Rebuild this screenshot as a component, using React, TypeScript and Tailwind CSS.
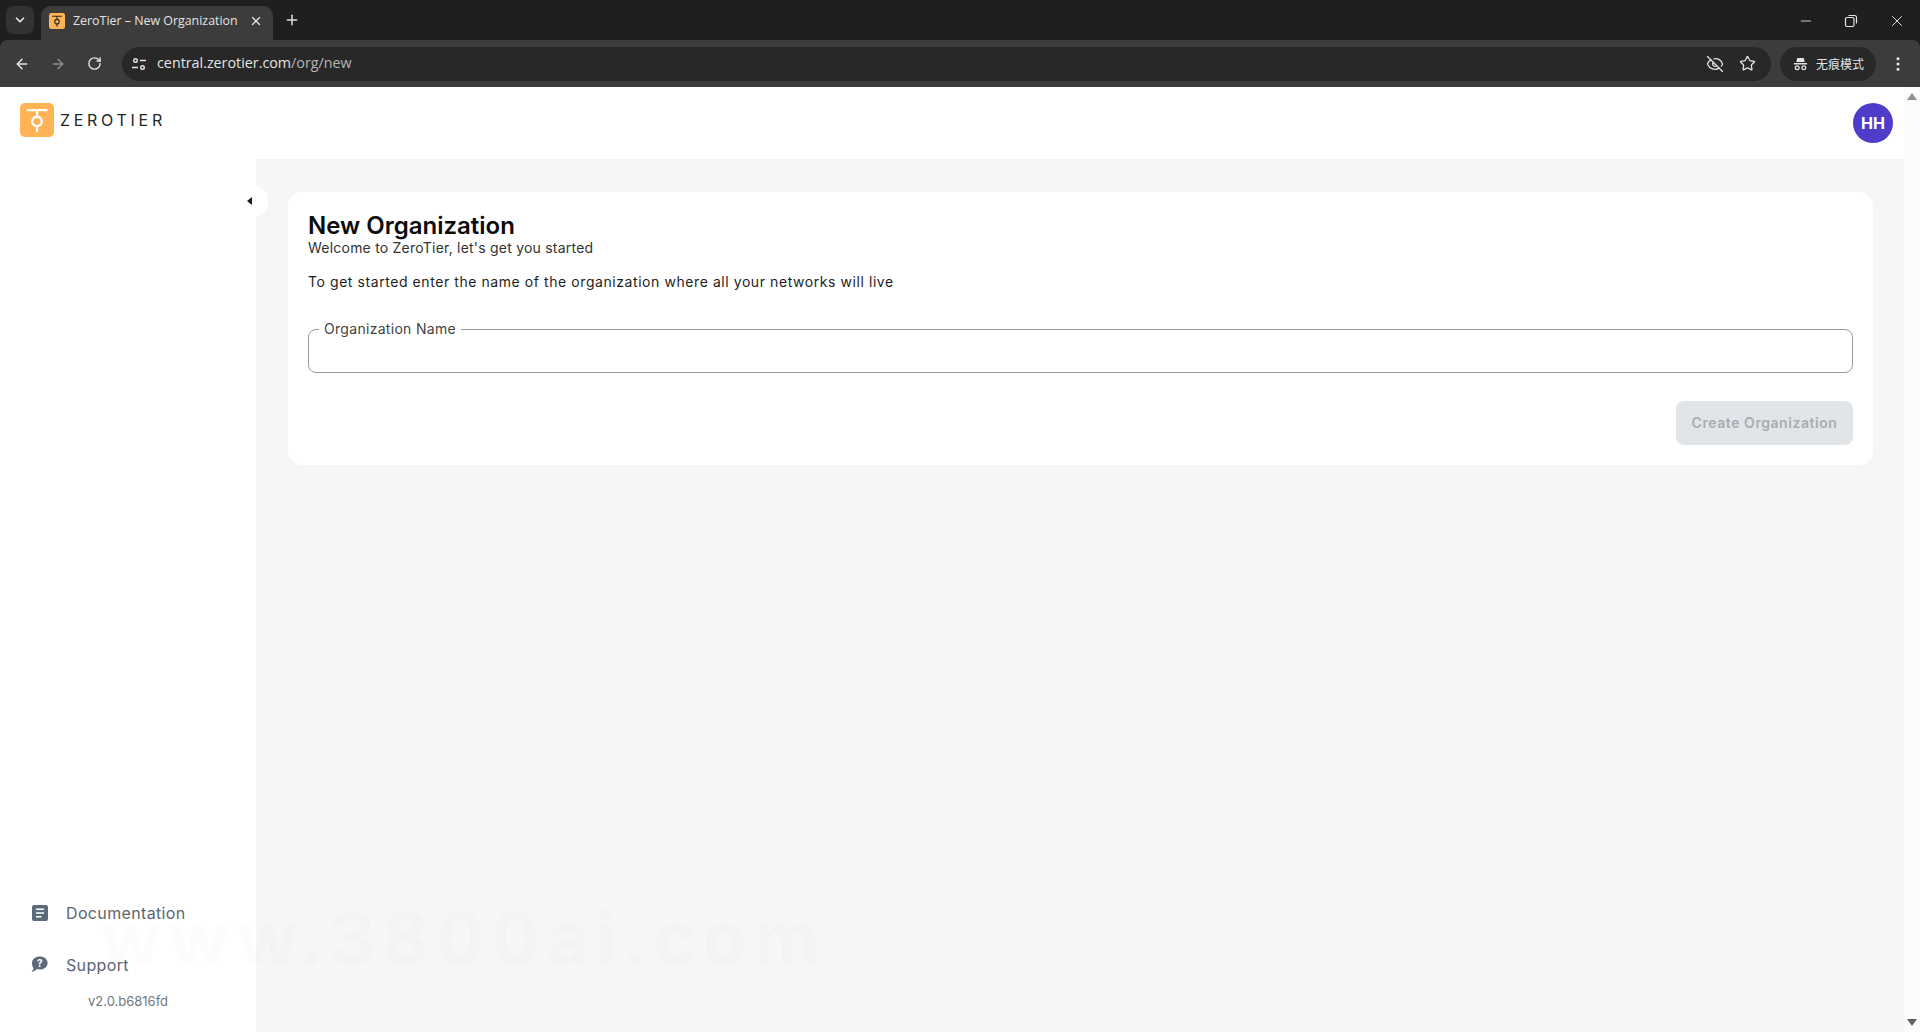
import { ArrowLeft, ArrowRight, ChevronDown, EyeOff, MoreVertical, Plus, RotateCw, Star, X, Minus } from "lucide-react";

function ZeroTierMark({ size, stroke }: { size: number; stroke: string }) {
  return (
    <svg width={size} height={size} viewBox="0 0 36 36" fill="none">
      <rect width="36" height="36" rx="5" fill="#ffb354" />
      <path d="M7 7.5h22M18 7.5v6.5M18 25v6" stroke={stroke} strokeWidth="2.4" />
      <circle cx="18" cy="19.5" r="5" stroke={stroke} strokeWidth="2.6" />
    </svg>
  );
}

function ChromeBar() {
  return (
    <div className="h-[87px] shrink-0 bg-[#1f1f1f] font-['Open_Sans',sans-serif] text-[#e3e3e3]">
      {/* tab strip */}
      <div className="flex h-10 items-end pl-[6px]">
        <div className="mb-[6px] flex h-7 w-7 items-center justify-center rounded-lg bg-[#333333]">
          <ChevronDown size={14} strokeWidth={3} />
        </div>
        <div className="ml-[7px] flex h-[34px] w-[232px] items-center rounded-t-[10px] bg-[#3c3c3c] pb-[4px] pl-2 pr-2">
          <ZeroTierMark size={16} stroke="#2a2a2a" />
          <span className="ml-2 text-[12.4px] whitespace-nowrap">ZeroTier – New Organization</span>
          <X size={14} strokeWidth={2.2} className="ml-auto mr-[2px]" />
        </div>
        <Plus size={16} strokeWidth={2.2} className="mb-[12px] ml-[11px]" />
        <div className="mb-[10px] ml-auto flex items-center gap-[30px] pr-[14px]">
          <Minus size={16} strokeWidth={1.3} />
          <svg width="14" height="14" viewBox="0 0 14 14" fill="none" stroke="currentColor" strokeWidth="1.2">
            <rect x="1.5" y="3.5" width="8.5" height="9" rx="1.5" />
            <path d="M4.5 1.5h6a2 2 0 0 1 2 2v6" />
          </svg>
          <X size={18} strokeWidth={1.3} />
        </div>
      </div>
      {/* toolbar */}
      <div className="flex h-[47px] items-center rounded-t-lg bg-[#3c3c3c] pl-[14px] pr-[13px]">
        <ArrowLeft size={16} strokeWidth={2.2} />
        <ArrowRight size={16} strokeWidth={2.2} className="ml-[20px] text-[#8a8a8a]" />
        <RotateCw size={15} strokeWidth={2.2} className="ml-[21px]" />
        <div className="ml-[20px] flex h-[34px] min-w-0 flex-1 items-center rounded-full bg-[#282828] pl-[8px] pr-[15px]">
          <svg width="18" height="18" viewBox="0 0 18 18" fill="none" stroke="currentColor" strokeWidth="1.4">
            <circle cx="5.5" cy="5.5" r="1.8" />
            <path d="M10 5.5h6M2 12.5h6" />
            <circle cx="12.5" cy="12.5" r="1.8" />
          </svg>
          <span className="-mt-[2px] ml-[9px] text-[14.3px] whitespace-nowrap">
            central.zerotier.com<span className="text-[#b5b5b5]">/org/new</span>
          </span>
          <EyeOff size={18} strokeWidth={1.7} className="ml-auto" />
          <Star size={17} strokeWidth={1.8} className="ml-[15px]" />
        </div>
        <div className="ml-[9px] flex h-[34px] w-[96px] items-center rounded-full bg-[#282828] pl-[13px]">
          <svg width="15" height="15" viewBox="0 0 16 16" fill="currentColor">
            <path d="M4.5 2h7l1 4.5h-9zM1 7.5h14V9H1z" />
            <circle cx="4.5" cy="12.5" r="2" fill="none" stroke="currentColor" strokeWidth="1.4" />
            <circle cx="11.5" cy="12.5" r="2" fill="none" stroke="currentColor" strokeWidth="1.4" />
          </svg>
          <span className="ml-[8px] font-['Noto_Sans_CJK_SC',sans-serif] text-xs whitespace-nowrap">无痕模式</span>
        </div>
        <MoreVertical size={18} strokeWidth={2.2} className="ml-[13px]" />
      </div>
    </div>
  );
}

function Sidebar() {
  return (
    <aside className="relative flex w-[256px] shrink-0 flex-col bg-white pb-[23px] text-[#5a6672]">
      {/* collapse handle */}
      <div className="absolute left-[237px] top-[26px] flex h-[32px] w-[31px] items-center justify-center rounded-full bg-white">
        <span className="mr-[6px] h-0 w-0 border-y-[4px] border-r-[5px] border-y-transparent border-r-[#1a1a1a]" />
      </div>
      <div className="mt-auto flex flex-col">
        <a className="flex items-center pl-[32px]">
          <svg width="16" height="16" viewBox="0 0 16 16" className="-mt-[2px] text-[#5b6b7b]" fill="currentColor">
            <path fillRule="evenodd" d="M2 0h12a2 2 0 0 1 2 2v12a2 2 0 0 1-2 2H2a2 2 0 0 1-2-2V2a2 2 0 0 1 2-2zm2 3.500v1.600h8V3.500zm0 3.700v1.600h8V7.200zm0 3.700v1.600h5.500v-1.600z" />
          </svg>
          <span className="ml-[18px] -mt-[1px] text-base leading-5 tracking-[0.35px]">Documentation</span>
        </a>
        <a className="mt-[32px] flex items-center pl-[31px]">
          <svg width="17" height="17" viewBox="0 0 17 17" className="-mt-[2px] text-[#5b6b7b]">
            <path fill="currentColor" d="M8.800 0.500C13 0.500 16.600 3 16.600 7s-3.600 6.500-7.800 6.500c-1 0-2-.15-2.900-.45C4.700 14.500 2.800 15.500.5 15.800c1-1 1.800-2.300 2-3.700C1.600 11 1 9.200 1 7 1 3 4.600.5 8.800.5z" />
            <text x="8.800" y="10.800" textAnchor="middle" fontSize="10" fontWeight="700" fill="#fff" fontFamily="Inter, sans-serif">?</text>
          </svg>
          <span className="ml-[18px] text-base leading-5 tracking-[0.35px]">Support</span>
        </a>
        <div className="mt-[18px] pl-[88px] text-[13px] leading-4 text-[#6f7780]">v2.0.b6816fd</div>
      </div>
    </aside>
  );
}

function NewOrgCard() {
  return (
    <section className="rounded-[14px] bg-white px-5 pb-5 pt-[18px]">
      <h1 className="text-2xl leading-[32px] font-semibold text-[#0b0b0b]">New Organization</h1>
      <p className="-mt-[2px] text-sm leading-4 tracking-[0.22px] text-[#333]">Welcome to ZeroTier, let's get you started</p>
      <p className="mt-[18px] text-sm leading-4 tracking-[0.57px] text-[#1e1e1e]">
        To get started enter the name of the organization where all your networks will live
      </p>
      <fieldset className="mt-[31px] h-[52px] rounded-lg border border-[#9a9a9a] pl-[10px]">
        <legend className="px-[5px] text-sm leading-4 tracking-[0.3px] text-[#444]">Organization Name</legend>
      </fieldset>
      <div className="mt-[28px] flex justify-end">
        <button
          disabled
          className="h-[44px] w-[177px] rounded-lg bg-[#e2e5e8] text-sm font-semibold tracking-[0.55px] text-[#a6adb3]"
        >
          Create Organization
        </button>
      </div>
    </section>
  );
}

function Scrollbar() {
  return (
    <div className="flex w-[16px] shrink-0 flex-col items-center justify-between bg-[#fbfbfb] py-[6px]">
      <span className="h-0 w-0 border-x-[5px] border-b-[7px] border-x-transparent border-b-[#8f8f8f]" />
      <span className="h-0 w-0 border-x-[5px] border-t-[7px] border-x-transparent border-t-[#5f5f5f]" />
    </div>
  );
}

export default function App() {
  return (
    <div className="relative flex h-[1032px] w-full flex-col overflow-hidden bg-white font-['Inter',sans-serif]">
      <ChromeBar />
      <div className="flex min-h-0 flex-1">
        <div className="flex min-w-0 flex-1 flex-col">
          <header className="flex h-[72px] shrink-0 items-center bg-white pl-5 pr-[11px]">
            <div className="-mt-[6px] flex items-center">
              <ZeroTierMark size={34} stroke="#fff" />
              <span className="ml-[6px] text-[16px] font-normal tracking-[3.7px] text-[#262626]">ZEROTIER</span>
            </div>
            <div className="ml-auto flex h-10 w-10 items-center justify-center rounded-full bg-[#4f3ccb] text-base font-bold text-white">
              HH
            </div>
          </header>
          <div className="flex min-h-0 flex-1">
            <Sidebar />
            <main className="min-w-0 flex-1 bg-[#f4f6f8] pl-[32px] pr-[31px] pt-[33px]">
              <NewOrgCard />
            </main>
          </div>
        </div>
        <Scrollbar />
      </div>
      {/* faint watermark baked into the screenshot */}
      <div className="pointer-events-none absolute left-[100px] top-[896px] text-[72px] leading-[84px] font-bold tracking-[7px] whitespace-nowrap text-[#7a6a5a]/[0.02]">
        www.3800ai.com
      </div>
    </div>
  );
}
